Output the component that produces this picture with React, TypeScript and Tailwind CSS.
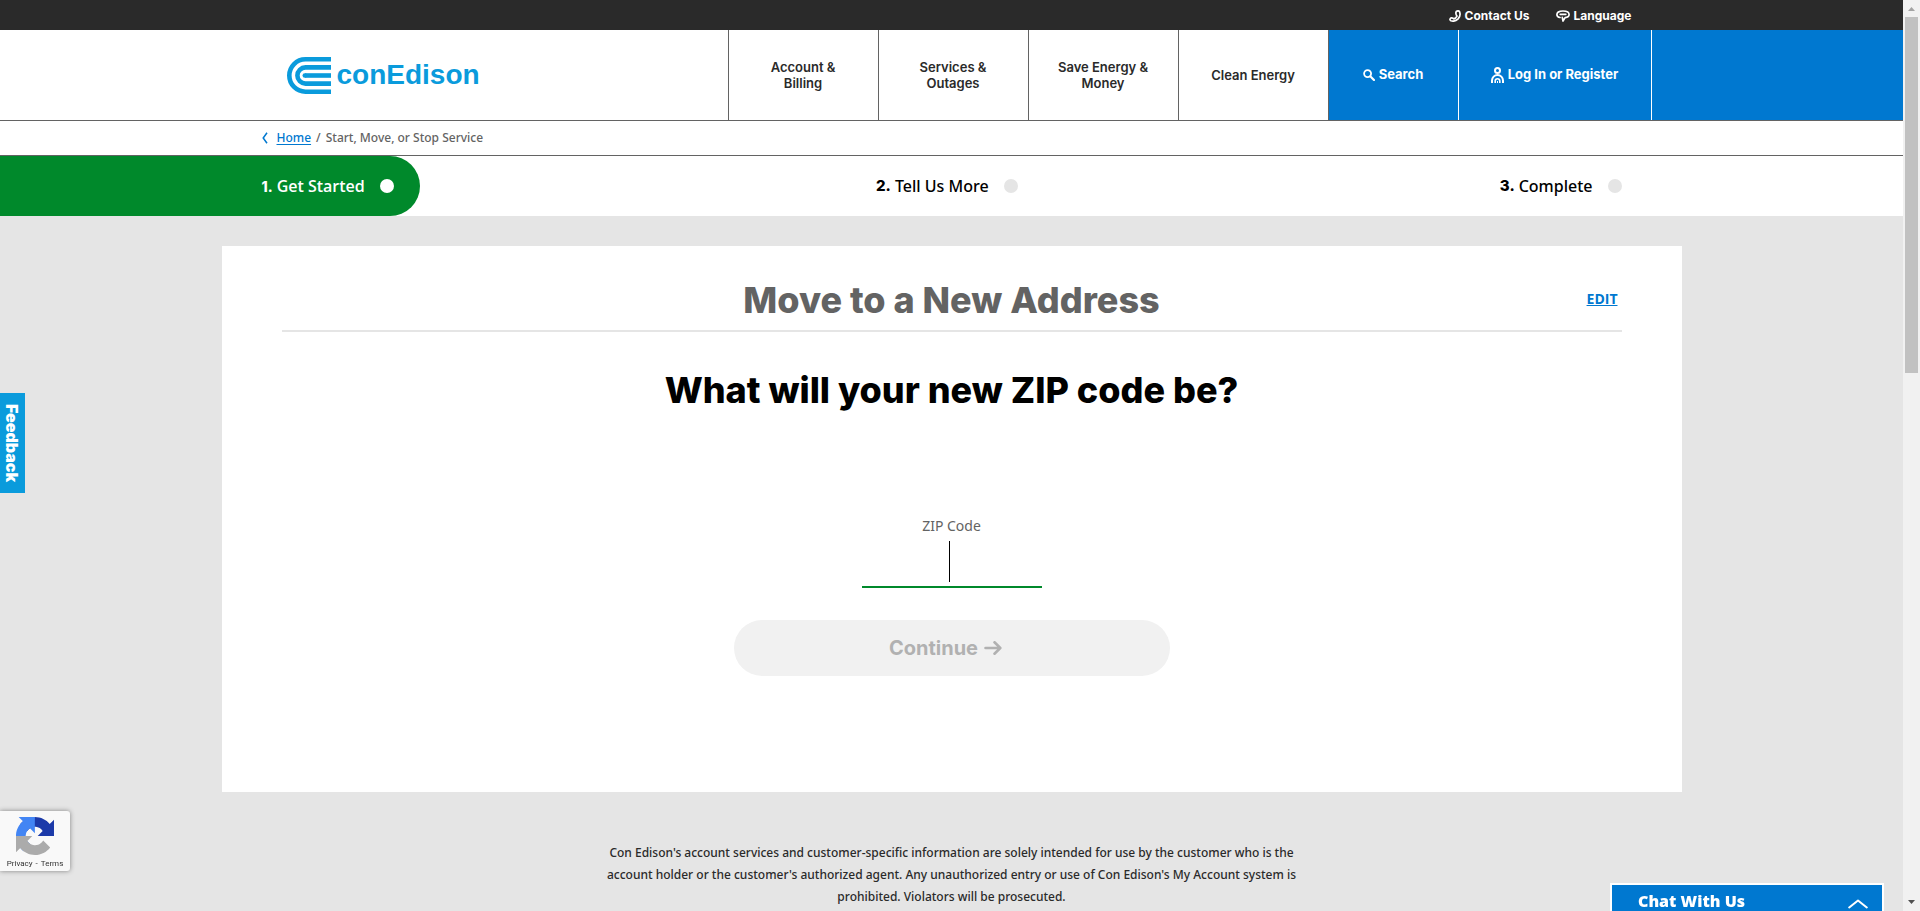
import React from "react";

const display = "font-[Inter,'Open_Sans',sans-serif]";

function Logo() {
  return (
    <a href="#home" aria-label="conEdison" className="flex items-center gap-[6px] text-[#0a9bdc]">
      <svg width="44" height="37" viewBox="0 0 44 37" fill="none" stroke="currentColor" strokeWidth="4.6" aria-hidden="true">
        <path d="M44 2.300H18.500a16.200 16.200 0 0 0 0 32.400H44" />
        <path d="M44 10.400H18.500a8.100 8.100 0 0 0 0 16.200H44" />
        <path d="M44 18.500H18" />
        <circle cx="17.800" cy="18.500" r="2.300" fill="currentColor" stroke="none" />
      </svg>
      <span className="font-['Liberation_Sans',Arial,sans-serif] text-[28px] leading-8 font-bold">conEdison</span>
    </a>
  );
}

function PhoneIcon() {
  return (
    <svg width="12" height="12" viewBox="0 0 12 12" fill="none" stroke="currentColor" strokeWidth="1.700" strokeLinejoin="round" aria-hidden="true">
      <path d="M7.300 1.500c1-.9 2.600-.8 3.300.2.900 2.600.3 5.300-1.500 7.200-1.900 1.900-4.800 2.700-7.200 1.800-1-.5-1.200-1.600-.6-2.200.7-.8 1.900-.9 2.700-.2l.8.600c1.500-.5 2.500-1.400 3.200-2.800l-.7-1.300c-.5-1.100-.5-2.500 0-3.300z" />
    </svg>
  );
}

function SpeechIcon() {
  return (
    <svg width="14" height="12" viewBox="0 0 14 12" fill="none" stroke="currentColor" strokeWidth="1.700" strokeLinecap="round" strokeLinejoin="round" aria-hidden="true">
      <path d="M4 7.500C2 7.100.9 6 .9 4.400.9 2.400 3.300 1 7 1s6.100 1.300 6.100 3.400c0 1.800-1.600 2.900-4 3.200L7 11 6.300 7.300" />
      <path d="M4.200 4.300h5.600" />
    </svg>
  );
}

function SearchIcon() {
  return (
    <svg width="12" height="12" viewBox="0 0 12 12" fill="none" stroke="currentColor" strokeWidth="1.800" strokeLinecap="round" aria-hidden="true">
      <circle cx="4.600" cy="4.600" r="3.500" />
      <path d="m7.500 7.500 3.500 3.500" strokeWidth="2.200" />
    </svg>
  );
}

function PersonIcon() {
  return (
    <svg width="13" height="16" viewBox="0 0 13 16" fill="none" stroke="currentColor" strokeWidth="2" aria-hidden="true">
      <circle cx="6.500" cy="3.500" r="2.500" />
      <path d="M1 16v-2.500a5.500 5.500 0 0 1 11 0V16" />
      <path d="M4.200 16v-2a2.300 2.300 0 0 1 4.600 0v2" strokeWidth="1.600" />
      <path d="M6.500 14v2" strokeWidth="1" />
    </svg>
  );
}

function RecaptchaMark() {
  return (
    <svg width="38" height="38" viewBox="0 0 64 64" aria-hidden="true">
      <path fill="#1c3aa9" d="M64 31.955c-.001-.46-.011-.918-.032-1.373V4.619l-7.178 7.178C50.915 4.606 41.979.014 31.970.014c-10.416 0-19.670 4.972-25.508 12.673l11.766 11.889c1.153-2.133 2.790-3.964 4.766-5.348 2.055-1.604 4.967-2.915 8.964-2.915.483 0 .856.056 1.129.163 4.951.391 9.244 3.124 11.771 7.090l-8.328 8.328c10.549-.041 22.466-.066 27.469.006Z" />
      <path fill="#4285f4" d="M31.862.014c-.46.001-.918.011-1.373.032H4.526l7.178 7.178C4.513 13.099-.079 22.035-.079 32.044c0 10.416 4.972 19.670 12.673 25.508l11.889-11.766c-2.133-1.153-3.964-2.790-5.348-4.766-1.604-2.055-2.915-4.967-2.915-8.964 0-.483.056-.856.163-1.129.391-4.951 3.124-9.244 7.090-11.771l8.328 8.328c-.041-10.549-.066-22.466.061-27.470Z" />
      <path fill="#ababab" d="M0 32.045c.001.460.011.918.032 1.373v25.963l7.178-7.178c5.875 7.191 14.811 11.783 24.820 11.783 10.416 0 19.670-4.972 25.508-12.673L45.772 39.424c-1.153 2.133-2.790 3.964-4.766 5.348-2.055 1.604-4.967 2.915-8.964 2.915-.483 0-.856-.056-1.129-.163-4.951-.391-9.244-3.124-11.771-7.090l8.328-8.328C16.921 32.147 5.004 32.172 0 32.100Z" />
    </svg>
  );
}

function TopBar() {
  return (
    <div className="flex h-[30px] justify-center bg-[#2a2a2a]">
      <div className={`${display} flex w-full max-w-[1360px] items-center justify-end gap-[26px] pt-px text-[12px] font-bold text-white`}>
        <a href="#contact" className="flex items-center gap-1"><PhoneIcon />Contact Us</a>
        <a href="#language" className="flex items-center gap-1"><SpeechIcon />Language</a>
      </div>
    </div>
  );
}

function Header() {
  const items = ["Account & Billing", "Services & Outages", "Save Energy & Money", "Clean Energy"];
  return (
    <header className={`${display} flex h-[91px] border-b border-[#636363] bg-white`}>
      <div className="flex-1" />
      <div className="flex w-full max-w-[1400px] justify-between">
        <div className="flex items-center pl-[35px]"><Logo /></div>
        <nav className="flex">
          {items.map((item) => (
            <a key={item} href="#menu" className="flex w-[150px] items-center justify-center border-l border-[#636363] px-6 text-center text-[13px] leading-4 font-semibold text-[#2a2a2a]">
              <span className="max-w-[104px]">{item}</span>
            </a>
          ))}
          <button type="button" className="flex w-[130px] items-center justify-center gap-1 border-l border-[#636363] bg-[#0078d0] text-[13px] font-bold text-white">
            <SearchIcon />Search
          </button>
          <a href="#login" className="flex w-[194px] items-center justify-center gap-1 border-x border-white bg-[#0078d0] text-[13px] font-bold text-white">
            <PersonIcon />Log In or Register
          </a>
        </nav>
      </div>
      <div className="flex-1 bg-[#0078d0]" />
    </header>
  );
}

function Breadcrumb() {
  return (
    <nav aria-label="Breadcrumb" className="flex h-[35px] justify-center border-b border-[#636363] bg-white">
      <div className="flex w-full max-w-[1380px] items-center font-['Noto_Sans',sans-serif] text-[12px] font-medium text-[#636363]">
        <svg width="6" height="12" viewBox="0 0 6 12" fill="none" stroke="#0078d0" strokeWidth="1.500" aria-hidden="true">
          <path d="M5 .7 1.200 6 5 11.300" />
        </svg>
        <a href="#home" className="ml-[9px] text-[#0078d0] underline underline-offset-2">Home</a>
        <span className="mx-[5px]">/</span>
        <span>Start, Move, or Stop Service</span>
      </div>
    </nav>
  );
}

function Steps() {
  const dot = "size-[14px] rounded-full";
  return (
    <div className="flex h-[60px] bg-white">
      <div className="flex-1 bg-[#00892b]" />
      <ol className="flex w-full max-w-[1380px] justify-between pr-5 text-[16px] text-black">
        <li className="-mr-[26px] flex items-center rounded-r-full bg-[#00892b] pr-[26px] font-semibold text-white">
          <span className={`${display} mr-1 text-[14px] font-extrabold`}>1.</span>Get Started
          <span className={`${dot} ml-[15px] bg-white`} />
        </li>
        <li className="flex items-center font-['Noto_Sans',sans-serif] font-medium">
          <span className={`${display} mr-1 text-[15px] font-extrabold`}>2.</span>Tell Us More
          <span className={`${dot} ml-[15px] bg-[#e5e5e5]`} />
        </li>
        <li className="flex items-center font-['Noto_Sans',sans-serif] font-medium">
          <span className={`${display} mr-1 text-[15px] font-extrabold`}>3.</span>Complete
          <span className={`${dot} ml-[15px] bg-[#e5e5e5]`} />
        </li>
      </ol>
      <div className="flex-1" />
    </div>
  );
}

function ZipCard() {
  return (
    <section className="mt-[30px] min-h-[546px] w-full max-w-[1460px] bg-white px-[60px] pt-[30px]">
      <div className="grid grid-cols-[1fr_auto_1fr] items-center border-b-2 border-[#e5e5e5] pb-[6px]">
        <h1 className={`${display} col-start-2 text-[36px] leading-[48px] font-extrabold text-[#636363]`}>Move to a New Address</h1>
        <a href="#edit" className="justify-self-end pr-1 pb-1 text-[14px] font-bold text-[#0078d0] underline">EDIT</a>
      </div>
      <h2 className={`${display} mt-[34px] text-center text-[36px] leading-[48px] font-extrabold text-black`}>What will your new ZIP code be?</h2>
      <form className="mt-[102px] flex flex-col items-center" onSubmit={(e) => e.preventDefault()}>
        <label htmlFor="zip" className="font-['Noto_Sans',sans-serif] text-[14px] leading-5 text-[#636363]">ZIP Code</label>
        <div className="relative mt-[2px] w-[180px]">
          <input id="zip" type="text" inputMode="numeric" className="block h-[50px] w-full border-b-2 border-[#00892b] bg-transparent text-center text-[30px] caret-transparent outline-none" />
          <span className="absolute top-[3px] left-[87px] h-[41px] w-px bg-black" />
        </div>
        <button type="submit" disabled className={`${display} mt-8 flex h-14 w-full max-w-[436px] items-center justify-center gap-[6px] rounded-full bg-[#f1f1f1] pr-3 text-[20px] font-bold text-[#b1b1b1]`}>
          Continue
          <svg width="18" height="14" viewBox="0 0 18 14" fill="none" stroke="currentColor" strokeWidth="2.600" strokeLinecap="round" strokeLinejoin="round" aria-hidden="true">
            <path d="M1.500 7H15.500M10.500 1.300 16.300 7l-5.800 5.700" />
          </svg>
        </button>
      </form>
    </section>
  );
}

export default function App() {
  return (
    <div className="flex h-screen overflow-hidden bg-[#e5e5e5] font-['Open_Sans','Noto_Sans',sans-serif]">
      <div className="h-full flex-1 overflow-hidden">
        <TopBar />
        <Header />
        <Breadcrumb />
        <Steps />
        <main className="flex flex-col items-center">
          <ZipCard />
          <p className="mt-[50px] w-full max-w-[710px] text-center font-['Noto_Sans',sans-serif] text-[12px] leading-[22px] font-medium text-[#2a2a2a]">
            Con Edison's account services and customer-specific information are solely intended for use by the customer who is the account holder or the customer's authorized agent. Any unauthorized entry or use of Con Edison's My Account system is prohibited. Violators will be prosecuted.
          </p>
        </main>
      </div>

      <div className="flex w-[17px] shrink-0 flex-col items-center bg-[#f1f1f1]" aria-hidden="true">
        <svg width="17" height="17" viewBox="0 0 17 17"><path d="M5 11h7L8.500 7z" fill="#a3a3a3" /></svg>
        <div className="h-[356px] w-[13px] bg-[#c1c1c1]" />
        <svg width="17" height="17" viewBox="0 0 17 17" className="mt-auto"><path d="M5 6h7l-3.500 4z" fill="#505050" /></svg>
      </div>

      <button type="button" className={`${display} fixed top-[393px] left-0 flex h-[100px] w-[25px] items-center justify-center bg-[#0a9bdc] pr-[2px] text-[16px] leading-[22px] font-black text-white [writing-mode:vertical-rl]`}>
        Feedback
      </button>

      <div className="fixed bottom-10 left-0 flex h-[60px] w-[70px] flex-col items-center rounded-r-[3px] bg-[#f9f9f9] pt-[6px] shadow-[0_0_5px_#808080]">
        <RecaptchaMark />
        <div className="mt-[3px] flex gap-[3px] font-[Roboto,sans-serif] text-[8px] leading-3 text-[#333]">
          <a href="#privacy">Privacy</a>
          <span>-</span>
          <a href="#terms">Terms</a>
        </div>
      </div>

      <button type="button" className="fixed right-[36px] bottom-0 flex h-[28px] w-[274px] items-start justify-between border-2 border-b-0 border-white bg-[#0078d0] pt-[6px] pr-[14px] pl-[26px] text-[16px] leading-5 font-extrabold text-white">
        Chat With Us
        <svg width="20" height="10" viewBox="0 0 20 10" fill="none" stroke="currentColor" strokeWidth="2" strokeLinecap="round" strokeLinejoin="round" className="mt-2" aria-hidden="true">
          <path d="M1.200 8.500 10 1.500l8.800 7" />
        </svg>
      </button>
    </div>
  );
}
